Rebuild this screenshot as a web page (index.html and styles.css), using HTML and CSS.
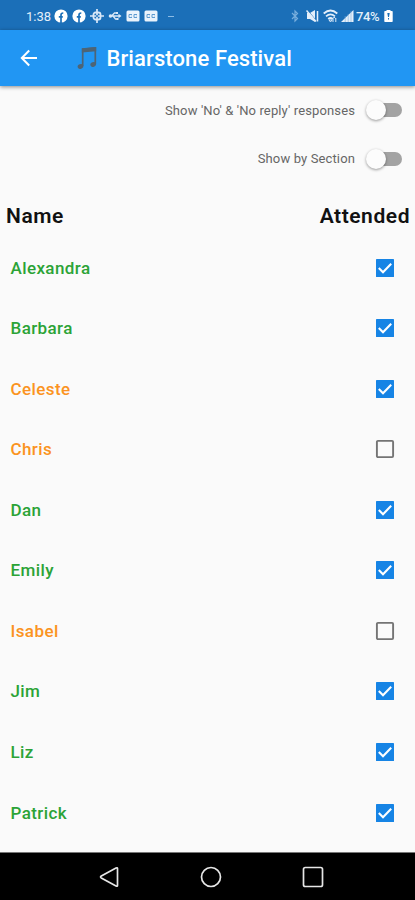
FILE: index.html
```html
<!DOCTYPE html>
<html lang="en">
<head>
<meta charset="utf-8">
<title>Briarstone Festival</title>
<link rel="stylesheet" href="styles.css">
</head>
<body>
<div class="status">
  <span class="clock">1:38</span>
  <div class="notices">
    <svg width="14" height="14" viewBox="0 0 14 14"><circle cx="7" cy="7" r="6.600" fill="#fff"/><path d="M7 14V6q0-2 2.300-2M4.800 7.800h4" stroke="#1b6fb8" stroke-width="1.700" fill="none"/></svg>
    <svg width="14" height="14" viewBox="0 0 14 14"><circle cx="7" cy="7" r="6.600" fill="#fff"/><path d="M7 14V6q0-2 2.300-2M4.800 7.800h4" stroke="#1b6fb8" stroke-width="1.700" fill="none"/></svg>
    <svg width="14" height="14" viewBox="0 0 14 14" stroke="#d9e8f8" fill="none"><rect x="3.500" y="3.500" width="7" height="7" rx="2" stroke-width="1.800"/><path d="M7 0v14M0 7h14" stroke-width="1.700"/><circle cx="7" cy="7" r="1" fill="#1b6fb8" stroke="none"/></svg>
    <svg width="14" height="14" viewBox="0 0 14 14" stroke="#d9e8f8" fill="none"><path d="M1 7h11M3.500 7l3-3h2M5 7l2.500 3h2" stroke-width="1.300"/><circle cx="2.500" cy="7" r="1.800" fill="#d9e8f8" stroke="none"/><path d="M10.500 4.800l3 2.200-3 2.200zM8 3h2v2H8zM8.500 9h2v2h-2z" fill="#d9e8f8" stroke="none"/></svg>
    <svg width="14" height="14" viewBox="0 0 14 14"><rect x=".5" y="1.500" width="13" height="11" rx="1.500" fill="#eaf3fc"/><path d="M6 5.500H3v3h3M11 5.500H8v3h3M5.500 7H6M10.500 7h.5" stroke="#5f9bd0" fill="none"/></svg>
    <svg width="14" height="14" viewBox="0 0 14 14"><rect x=".5" y="1.500" width="13" height="11" rx="1.500" fill="#eaf3fc"/><path d="M6 5.500H3v3h3M11 5.500H8v3h3M5.500 7H6M10.500 7h.5" stroke="#5f9bd0" fill="none"/></svg>
    <i class="more"></i>
  </div>
  <div class="system">
    <svg class="bt" width="8" height="14" viewBox="0 0 8 14"><path d="M1 4l5.500 5.500L4 12V2l2.500 2.500L1 10" fill="none" stroke="#78aedd" stroke-width="1.200"/></svg>
    <svg class="mute" width="13" height="14" viewBox="0 0 13 14"><path d="M1 4h3L9 1v12L4 10H1z" fill="#e4effa"/><path d="M1.500 1l9 11" stroke="#1b6fb8" stroke-width=".8"/><path d="M.5 1.500l9.500 11M11.500 2v10.500" stroke="#e4effa" stroke-width="1.500"/></svg>
    <svg class="wifi" width="15" height="14" viewBox="0 0 15 14"><path d="M.7 4.500Q7.500-1.500 14.300 4.500M3 7.300Q7.500 3.300 12 7.300M5.200 10q2.300-2 4.600 0" fill="none" stroke="#e4effa" stroke-width="1.700"/><path d="M6 11h3l-1.500 2zM10 13V9.500l1.200-1.500 1.200 1.500M12.800 9v4" fill="none" stroke="#d9e8f8"/></svg>
    <svg class="signal" width="13" height="14" viewBox="0 0 13 14"><path d="M0 13L12.500 1v12z" fill="#e4effa"/><path d="M4.200 7v6M7.200 5v8M10 2v11" stroke="#7fb0dc" stroke-width=".6"/></svg>
    <span class="percent">74%</span>
    <svg width="9" height="14" viewBox="0 0 9 14"><path d="M2.500 1h4v1H8q.7 0 .7.700v9.600q0 .7-.7.700H1q-.7 0-.7-.7V2.700Q.3 2 1 2h1.500z" fill="#fff"/><path d="M3.300 4h2.400L5 8H4zM4 9h1v1.500H4z" fill="#1b6fb8"/></svg>
  </div>
</div>
<header class="appbar">
  <svg class="back" width="18" height="18" viewBox="0 0 18 18"><path d="M9.200 1.500L1.800 9l7.400 7.500M2 9h15" fill="none" stroke="#fff" stroke-width="2"/></svg>
  <svg class="note" width="22" height="26" viewBox="0 0 22 26"><path d="M6.700 21V4.300L19.300 3v16" fill="none" stroke="#4d6475" stroke-width="1.700"/><path d="M5.800 3.300L20.200 2v4.200L5.800 7.500z" fill="#4d6475"/><ellipse cx="4.500" cy="21.500" rx="2.900" ry="2.300" transform="rotate(-20 4.500 21.500)" fill="#4d6475"/><ellipse cx="17.200" cy="19.500" rx="2.900" ry="2.300" transform="rotate(-20 17.200 19.500)" fill="#4d6475"/></svg>
  <h1>Briarstone Festival</h1>
</header>
<main>
  <div class="option"><span>Show 'No' &amp; 'No reply' responses</span><span class="switch"><b></b></span></div>
  <div class="option"><span>Show by Section</span><span class="switch"><b></b></span></div>
  <div class="head"><span>Name</span><span>Attended</span></div>
  <ul>
    <li><span>Alexandra</span><svg class="check"><use href="#on"/></svg></li>
    <li><span>Barbara</span><svg class="check"><use href="#on"/></svg></li>
    <li class="late"><span>Celeste</span><svg class="check"><use href="#on"/></svg></li>
    <li class="late"><span>Chris</span><svg class="check"><use href="#off"/></svg></li>
    <li><span>Dan</span><svg class="check"><use href="#on"/></svg></li>
    <li><span>Emily</span><svg class="check"><use href="#on"/></svg></li>
    <li class="late"><span>Isabel</span><svg class="check"><use href="#off"/></svg></li>
    <li><span>Jim</span><svg class="check"><use href="#on"/></svg></li>
    <li><span>Liz</span><svg class="check"><use href="#on"/></svg></li>
    <li><span>Patrick</span><svg class="check"><use href="#on"/></svg></li>
  </ul>
</main>
<nav>
  <svg width="24" height="24" viewBox="0 0 24 24"><path d="M20.500 3.600v16.800q0 1.200-1.500.5L4.300 12.900q-1.500-.9 0-1.800L19 3.100q1.500-.7 1.500.5z"/></svg>
  <svg width="24" height="24" viewBox="0 0 24 24"><circle cx="12" cy="12" r="9.500"/></svg>
  <svg width="24" height="24" viewBox="0 0 24 24"><rect x="2.500" y="2.500" width="19" height="19" rx="1.800"/></svg>
</nav>
<svg class="defs" width="0" height="0">
  <symbol id="on" viewBox="0 0 20 20"><rect x="1" y="1" width="18" height="18" rx=".6" fill="#1684e5"/><path d="M3.800 10l4.200 4.200 8.200-8.400" fill="none" stroke="#fff" stroke-width="2.100"/></symbol>
  <symbol id="off" viewBox="0 0 20 20"><rect x="1.900" y="1.900" width="16.200" height="16.200" rx="1" fill="none" stroke="#747474" stroke-width="1.900"/></symbol>
</svg>
</body>
</html>
```
FILE: styles.css
```css
* { box-sizing: border-box; }
body {
  margin: 0;
  height: 900px;
  display: flex;
  flex-direction: column;
  overflow: hidden;
  background: #fafafa;
  font-family: Roboto, sans-serif;
}
svg { display: block; flex: none; }
.status {
  height: 30px;
  flex: none;
  display: flex;
  align-items: center;
  padding: 2px 22px 0 26px;
  background: #1b6fb8;
  color: #e4effa;
}
.clock { width: 28px; font-size: 13px; }
.notices { display: flex; gap: 4px; align-items: center; }
.more { width: 6px; height: 1px; margin-left: 6px; background: #8bbbe5; }
.system { display: flex; align-items: center; margin-left: auto; }
.bt { margin-right: 7px; }
.mute { margin-right: 4px; }
.wifi { margin-right: 3px; }
.signal { margin-right: 2px; }
.percent { width: 28px; font-size: 13px; font-weight: 500; letter-spacing: -0.4px; }
.appbar {
  height: 56px;
  flex: none;
  display: flex;
  align-items: center;
  padding-left: 20px;
  background: #2196f3;
  box-shadow: 0 1px 4px rgba(0, 0, 0, 0.45);
}
.note { margin-left: 38px; }
h1 {
  margin: 0 0 0 8.500px;
  font-size: 22px;
  font-weight: 500;
  letter-spacing: 0.1px;
  color: #fff;
  white-space: nowrap;
}
main { flex: 1; }
.option {
  height: 48.500px;
  display: flex;
  align-items: center;
  justify-content: flex-end;
  padding-right: 13px;
  font-size: 13px;
  letter-spacing: 0.13px;
  color: #666;
}
.switch {
  width: 34px;
  height: 14px;
  margin-left: 13px;
  border-radius: 7px;
  background: #a3a3a3;
  display: flex;
  align-items: center;
}
.switch b {
  width: 20px;
  height: 20px;
  flex: none;
  margin-left: -2px;
  border-radius: 50%;
  background: #fcfcfc;
  box-shadow: 0 1px 3px rgba(0, 0, 0, 0.4);
}
.head {
  height: 54.400px;
  display: flex;
  align-items: center;
  justify-content: space-between;
  padding: 12px 5px 0 6px;
  font-size: 21px;
  font-weight: 600;
  letter-spacing: 0.55px;
  color: #111;
}
ul { margin: 0; padding: 0; list-style: none; }
li {
  height: 60.550px;
  display: flex;
  align-items: center;
  justify-content: space-between;
  padding: 0 20px 0 10.500px;
  font-size: 17px;
  font-weight: 500;
  letter-spacing: 0.4px;
  color: #2ba336;
}
.late { color: #fb9321; }
.check { width: 20px; height: 20px; }
nav {
  height: 48px;
  flex: none;
  display: flex;
  justify-content: center;
  align-items: center;
  gap: 78px;
  padding-left: 6px;
  border-top: 1px solid #777;
  background: #000;
}
nav svg { fill: none; stroke: #e6e6e6; stroke-width: 1.700; }
.defs { position: absolute; }
```
